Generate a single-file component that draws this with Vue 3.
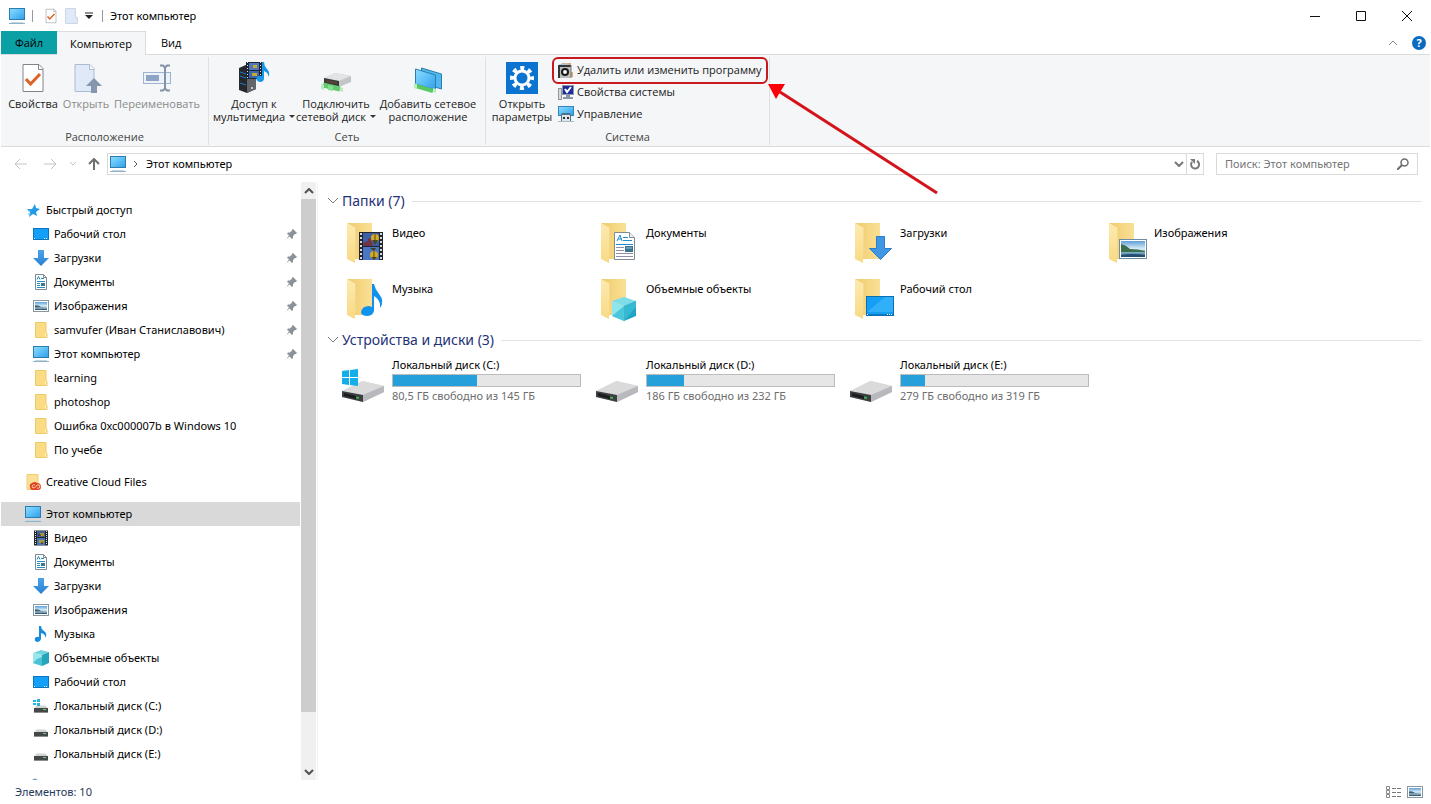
<script setup>
import { ref } from 'vue'

const search = ref('')

const quick = [
  { icon: 'desktop', text: 'Рабочий стол', pin: true },
  { icon: 'download', text: 'Загрузки', pin: true },
  { icon: 'document', text: 'Документы', pin: true },
  { icon: 'picture', text: 'Изображения', pin: true },
  { icon: 'folder', text: 'samvufer (Иван Станиславович)', pin: true },
  { icon: 'pc', text: 'Этот компьютер', pin: true },
  { icon: 'folder', text: 'learning' },
  { icon: 'folder', text: 'photoshop' },
  { icon: 'folder', text: 'Ошибка 0xc000007b в Windows 10' },
  { icon: 'folder', text: 'По учебе' }
]

const computer = [
  { icon: 'film', text: 'Видео' },
  { icon: 'document', text: 'Документы' },
  { icon: 'download', text: 'Загрузки' },
  { icon: 'picture', text: 'Изображения' },
  { icon: 'music', text: 'Музыка' },
  { icon: 'cube', text: 'Объемные объекты' },
  { icon: 'desktop', text: 'Рабочий стол' },
  { icon: 'disk-win', text: 'Локальный диск (C:)' },
  { icon: 'disk', text: 'Локальный диск (D:)' },
  { icon: 'disk', text: 'Локальный диск (E:)' }
]

const tree = [
  { icon: 'star', text: 'Быстрый доступ', items: quick },
  { icon: 'creative', text: 'Creative Cloud Files', items: [] },
  { icon: 'pc', text: 'Этот компьютер', selected: true, items: computer },
  { icon: 'network', text: '', items: [] }
]

const folders = [
  { icon: 'big-film', text: 'Видео' },
  { icon: 'big-document', text: 'Документы' },
  { icon: 'big-download', text: 'Загрузки' },
  { icon: 'big-picture', text: 'Изображения' },
  { icon: 'big-music', text: 'Музыка' },
  { icon: 'big-cube', text: 'Объемные объекты' },
  { icon: 'big-desktop', text: 'Рабочий стол' }
]

const disks = [
  { icon: 'big-disk-win', text: 'Локальный диск (C:)', used: 45, info: '80,5 ГБ свободно из 145 ГБ' },
  { icon: 'big-disk', text: 'Локальный диск (D:)', used: 20, info: '186 ГБ свободно из 232 ГБ' },
  { icon: 'big-disk', text: 'Локальный диск (E:)', used: 13, info: '279 ГБ свободно из 319 ГБ' }
]
</script>

<template>
  <div class="window">
    <svg class="sprite" aria-hidden="true">
      <defs>
        <linearGradient id="g-screen" x1="0" y1="0" x2="1" y2="1">
          <stop offset="0" stop-color="#8fdcfc" /><stop offset="0.5" stop-color="#5cc0f8" /><stop offset="1" stop-color="#2f9de8" />
        </linearGradient>
        <linearGradient id="g-folder" x1="0" y1="0" x2="1" y2="0">
          <stop offset="0" stop-color="#f0cb6c" /><stop offset="1" stop-color="#fae096" />
        </linearGradient>
        <linearGradient id="g-flap" x1="0" y1="0" x2="0" y2="1">
          <stop offset="0" stop-color="#fdeab0" /><stop offset="1" stop-color="#f8da84" />
        </linearGradient>
        <linearGradient id="g-sky" x1="0" y1="0" x2="0" y2="1">
          <stop offset="0" stop-color="#5f9fd6" /><stop offset="0.5" stop-color="#dbeef7" /><stop offset="0.7" stop-color="#7fb0c8" /><stop offset="1" stop-color="#2c6384" />
        </linearGradient>
        <linearGradient id="g-disk" x1="0" y1="0" x2="1" y2="1">
          <stop offset="0" stop-color="#e8e8e8" /><stop offset="1" stop-color="#c4c4c6" />
        </linearGradient>
        <linearGradient id="g-down" x1="0" y1="0" x2="0" y2="1">
          <stop offset="0" stop-color="#4aa3ea" /><stop offset="1" stop-color="#2a7fd4" />
        </linearGradient>
      </defs>

      <symbol id="pc" viewBox="0 0 16 16">
        <rect x="0.5" y="0.5" width="15" height="11" fill="url(#g-screen)" stroke="#2c7cae" />
        <path d="M2 14.5h12" stroke="#c3d6e0" /><path d="M0 15.5h16" stroke="#8fb3c6" />
      </symbol>
      <symbol id="desktop" viewBox="0 0 16 16">
        <rect x="0.5" y="2.5" width="15" height="11" fill="#12a0f8" stroke="#0a76be" />
        <path d="M1 12.5h1M11 12.5h4" stroke="#fff" stroke-dasharray="1 1" />
      </symbol>
      <symbol id="download" viewBox="0 0 16 16">
        <path d="M5 0h6v8h5l-8 8l-8-8h5z" fill="url(#g-down)" />
      </symbol>
      <symbol id="document" viewBox="0 0 16 16">
        <path d="M2.500.5h8l3 3v12h-11z" fill="#fff" stroke="#7d8b93" /><path d="M10.500.5v3h3" fill="none" stroke="#7d8b93" />
        <path d="M4 5.500l1.500-3l1.500 3M8 4.500h3M4 7.500h8M4 9.500h3M4 11.500h3M4 13.500h8" fill="none" stroke="#1e8fc0" />
        <rect x="8" y="9" width="4" height="3" fill="#3e7589" />
      </symbol>
      <symbol id="picture" viewBox="0 0 16 16">
        <rect x="0.5" y="2.500" width="15" height="11" fill="#fff" stroke="#8b979e" />
        <rect x="2" y="4" width="12" height="8" fill="url(#g-sky)" />
        <path d="M2 7.500q3-1 6 1.500l6 1v2H2z" fill="#365f78" /><path d="M2 10h12" stroke="#c6dce8" />
      </symbol>
      <symbol id="folder" viewBox="0 0 16 16">
        <path d="M2 .5h11v10h1v5H2z" fill="#f9dc84" /><path d="M2.500.5h10.500v10l1 1v4h-11.500z" fill="none" stroke="#edca68" />
        <path d="M12.500 11v4" stroke="#fff0bd" />
      </symbol>
      <symbol id="film" viewBox="0 0 16 16">
        <rect x="1" y="0.500" width="14" height="15" fill="#22252b" /><rect x="4" y="1" width="8" height="6" fill="#46618f" /><rect x="4" y="8" width="8" height="7" fill="#4a76b5" />
        <path d="M2.500 1v14M13.500 1v14" stroke="#dfe2e6" stroke-dasharray="1 1" /><path d="M7 3h4v3H7zM6 10h5v3H6z" fill="#a59a3c" />
        <path d="M5 5h3M8 13h2" stroke="#31211b" />
      </symbol>
      <symbol id="music" viewBox="0 0 16 16">
        <path d="M6 0h2q0 3 3 5q4 3 1 7q1-4-4-5v6q-1 3-4 3q-3-1-2-4q2-2 4-1z" fill="#168cdb" />
      </symbol>
      <symbol id="cube" viewBox="0 0 16 16">
        <path d="M0 3l8-3l8 2l-7 3z" fill="#73d3df" /><path d="M0 3l9 2v11l-9-3z" fill="#9be6ed" /><path d="M9 5l7-3v11l-7 3z" fill="#25a4ba" />
        <path d="M4 9l5-2v9l-9-3z" fill="#4ac2d3" />
      </symbol>
      <symbol id="disk" viewBox="0 0 16 16">
        <path d="M3.500 7.500h9l2.500 3H1z" fill="#d3d3d3" /><rect x="1" y="10" width="14" height="4" fill="#45484a" /><rect x="10" y="11" width="3" height="1" fill="#72c977" /><path d="M1 14.500h14" stroke="#8b8d8e" />
      </symbol>
      <symbol id="disk-win" viewBox="0 0 16 16">
        <use href="#disk" /><path d="M0 2h3v2H0zM4 1h3v3H4zM0 5h3v2H0zM4 5h3v3H4z" fill="#25b5e0" />
      </symbol>
      <symbol id="star" viewBox="0 0 16 16">
        <path d="M10 2l1 4l4 1l-4 3l1 4l-4-2l-4 3l1-5l-3-3h5z" fill="#219be5" /><path d="M3 9h3M3 12h3" stroke="#6cbfec" fill="none" />
      </symbol>
      <symbol id="creative" viewBox="0 0 16 16">
        <path d="M2 .5h11v15H2z" fill="#fbe095" stroke="#f1cf74" />
        <path d="M5 13q-1-3 2-4q3-2 5 0q4 0 4 4q0 3-3 3H8q-3 0-3-3z" fill="#e0431f" />
        <path d="M10 11q-2-1-3 1q0 2 2 2q2-1 3-3q3-1 3 2q-1 2-3 1" fill="none" stroke="#fbc9a5" />
      </symbol>
      <symbol id="network" viewBox="0 0 16 16">
        <path d="M7 2q3-3 6 0l3 4v8H5z" fill="#68a8c6" />
      </symbol>
      <symbol id="pin" viewBox="0 0 12 12">
        <path d="M7 1l4 4l-1 1h-1l-2 2v2l-1 1l-2.500-2.500l-3.500 3l3-4l-2-2l1-1h2l2-2v-1z" fill="#8b9299" />
      </symbol>
      <symbol id="sheet-check" viewBox="0 0 24 32">
        <path d="M2 2.500h16l4 4v23H2z" fill="#fff" stroke="#82868a" /><path d="M17.500 2.500v5h4.500" fill="none" stroke="#82868a" />
        <path d="M5 17l4.500 5l9.500-10" fill="none" stroke="#dc6226" stroke-width="3" />
      </symbol>

      <symbol id="big-folder" viewBox="0 0 48 48">
        <path d="M6 4h25v36H12z" fill="url(#g-folder)" /><path d="M6 4l9 5l1 27l-2 2v6l-8-4z" fill="url(#g-flap)" />
        <path d="M15 9v27" stroke="#e9c266" opacity="0.6" />
      </symbol>
      <symbol id="big-film" viewBox="0 0 48 48">
        <use href="#big-folder" /><rect x="18" y="13" width="24" height="28" fill="#23262e" />
        <rect x="22" y="14" width="16" height="13" fill="#3e5fa8" /><rect x="22" y="28" width="16" height="13" fill="#4976c5" />
        <path d="M20 14v27M40 14v27" stroke="#d5d9de" stroke-width="2" stroke-dasharray="2 2" />
        <path d="M22 24l5-2v-3l3 1l2 7H22z" fill="#713346" /><circle cx="34" cy="19" r="4" fill="#d1ac29" /><path d="M31 21h6l-3 5z" fill="#3b4a22" /><circle cx="33" cy="36" r="4" fill="#d1ac29" /><path d="M30 38h6l-3 3zM29 29h6l-2 3z" fill="#453f1f" />
        <path d="M34 15v8M33 32v8" stroke="#694319" />
      </symbol>
      <symbol id="big-document" viewBox="0 0 48 48">
        <use href="#big-folder" /><path d="M19.500 13.500h15l5 5v22h-20z" fill="#fff" stroke="#7f8b92" /><path d="M34.500 13.500v5h5" fill="#eef2f4" stroke="#7f8b92" />
        <path d="M22 22l3-6l2 6M23 20h4M28 18.500h5M28 21.500h9M21 25.500h17" fill="none" stroke="#1f8dcc" />
        <path d="M21 28.500h8M21 31.500h8M21 34.500h17M21 37.500h17" stroke="#8f8fa8" /><rect x="30" y="27" width="8" height="6" fill="#3c7391" /><path d="M31 29h6" stroke="#9cc6dc" />
      </symbol>
      <symbol id="big-download" viewBox="0 0 48 48">
        <use href="#big-folder" /><path d="M27.500 17.500h8v12h7l-11 11l-11-11h7z" fill="#3f97e4" stroke="#2a7cc9" />
      </symbol>
      <symbol id="big-picture" viewBox="0 0 48 48">
        <use href="#big-folder" /><rect x="16.500" y="20.500" width="27" height="19" fill="#fff" stroke="#6f8ca3" /><rect x="18" y="22" width="24" height="16" fill="url(#g-sky)" />
        <path d="M18 25q5 1 9 5q8 0 15 2v1H18z" fill="#3c6f4c" /><path d="M18 36q12-2 24 0v2H18z" fill="#244f73" />
      </symbol>
      <symbol id="big-music" viewBox="0 0 48 48">
        <use href="#big-folder" /><path d="M31 9h2q1 5 5 10q6 7 1 14q1-8-6-12v14q0 5-6 6q-7 0-7-4q1-6 8-6l3 1z" fill="#0f93ee" />
      </symbol>
      <symbol id="big-cube" viewBox="0 0 48 48">
        <use href="#big-folder" /><path d="M17 26l12-4l12 4l-12 5z" fill="#7cdce8" /><path d="M17 26l12 5v15l-12-5z" fill="#8ee5ee" /><path d="M29 31l12-5v15l-12 5z" fill="#20a4c1" /><path d="M29 31v15l-12-5z" fill="#4cc7da" /><path d="M29 31l12-5v6l-12 14z" fill="#35b8d2" />
      </symbol>
      <symbol id="big-desktop" viewBox="0 0 48 48">
        <use href="#big-folder" /><rect x="17.500" y="21.500" width="27" height="19" fill="#149ef4" stroke="#0c6fb2" /><path d="M18 37l18-15h8v15z" fill="#32aff9" /><path d="M18 39.500h26" stroke="#0e78c0" /><path d="M18 39.500h2M38 39.500h5" stroke="#fff" stroke-dasharray="1 1" />
      </symbol>
      <symbol id="big-disk" viewBox="0 0 48 48">
        <path d="M1 28l20-10l22 5v6L22 39L1 34z" fill="url(#g-disk)" /><path d="M1 28l21-10l21 5l-21 9z" fill="#dadadb" /><path d="M22 32l21-9v6l-21 10z" fill="#b8b9bc" />
        <path d="M1 28l21 4v7L1 34z" fill="#3c3f41" /><path d="M3 30l12 3v3L3 33z" fill="#1a1c1e" /><path d="M15 33.500l3 .5v2l-3-.5z" fill="#3cae4b" />
      </symbol>
      <symbol id="big-disk-win" viewBox="0 0 48 48">
        <use href="#big-disk" /><path d="M1 8l7-1v7H1zM9 7l8-1v8H9zM1 15h7v7l-7-1zM9 15h8v8l-8-1z" fill="#14aeea" />
      </symbol>
    </svg>

    <header class="titlebar">
      <svg class="i16"><use href="#pc" /></svg>
      <span class="bar"></span>
      <button class="quick-btn" aria-label="Свойства"><svg width="12" height="16"><use href="#sheet-check" /></svg></button>
      <button class="quick-btn" aria-label="Новая папка">
        <svg width="14" height="16" viewBox="0 0 14 16"><path d="M.5.5h10v9h2v6H.5z" fill="#dfe9f8" stroke="#cbd6e6" /></svg>
      </button>
      <button class="quick-btn narrow" aria-label="Настройка панели">
        <svg width="8" height="8" viewBox="0 0 8 8"><path d="M0 1h8" stroke="#222" /><path d="M0 3h8l-4 4z" fill="#222" /></svg>
      </button>
      <span class="bar"></span>
      <h1>Этот компьютер</h1>
      <div class="controls">
        <button aria-label="Свернуть"><svg viewBox="0 0 12 12"><path d="M1 6.500h10" /></svg></button>
        <button aria-label="Развернуть"><svg viewBox="0 0 12 12"><path d="M1.500 1.500h9v9h-9z" /></svg></button>
        <button aria-label="Закрыть"><svg viewBox="0 0 12 12"><path d="M1 1l10 10M11 1L1 11" /></svg></button>
      </div>
    </header>

    <nav class="tabs">
      <button class="file">Файл</button>
      <button class="active">Компьютер</button>
      <button>Вид</button>
      <div class="tabs-end">
        <button aria-label="Свернуть ленту"><svg width="10" height="6" viewBox="0 0 10 6"><path d="M1 5l4-4l4 4" fill="none" stroke="#8b8b8b" /></svg></button>
        <button class="help" aria-label="Справка">?</button>
      </div>
    </nav>

    <section class="ribbon">
      <div class="group">
        <div class="tools location">
          <button class="tool"><svg width="24" height="32"><use href="#sheet-check" /></svg><span>Свойства</span></button>
          <button class="tool" disabled>
            <svg width="32" height="32" viewBox="0 0 32 32"><path d="M5 2.500h15l4 4v23H5z" fill="#dfe9f7" stroke="#aebcd0" /><path d="M19.500 2.500v5h5" fill="#f5f8fc" stroke="#aebcd0" /><path d="M24 16l8 8h-5v7h-6v-7h-5z" fill="#8696ae" /></svg>
            <span>Открыть</span>
          </button>
          <button class="tool" disabled>
            <svg width="32" height="32" viewBox="0 0 32 32"><rect x="2.500" y="10.500" width="27" height="11" fill="#edf2f9" stroke="#9fb4d1" /><rect x="5" y="13" width="13" height="6" fill="#8da4c4" /><path d="M19 3.500h3l2 2l2-2h3M24 5v22M19 28.500h3l2-2l2 2h3" fill="none" stroke="#8292a8" stroke-width="2" /></svg>
            <span>Переименовать</span>
          </button>
        </div>
        <h2>Расположение</h2>
      </div>

      <div class="group">
        <div class="tools network">
          <button class="tool">
            <svg width="32" height="32" viewBox="0 0 32 32"><path d="M1 6l9-4l8 3v22l-9 4l-8-3z" fill="#25282c" /><path d="M9 8l9-3v22l-9 4z" fill="#62666b" /><path d="M2 10l6 2M2 14l6 2M2 21l6 2" stroke="#1c79c3" /><circle cx="14" cy="26" r="1" fill="#e6e6e6" /><rect x="8" y="0" width="16" height="17" fill="#202535" /><rect x="11" y="1" width="10" height="7" fill="#4f77b9" /><rect x="11" y="9" width="10" height="7" fill="#3c67ac" /><path d="M9.500 0v17M22.500 0v17" stroke="#dde2e8" stroke-dasharray="1 2" /><path d="M15 3h4v3h-4zM14 11h5v3h-5z" fill="#c2ab2e" /><path d="M24 0h2q0 4 3 7q4 4 1 8q1-4-4-6v7q0 4-4 4q-5-1-3-5q2-2 5-1z" fill="#1696ed" /></svg>
            <span>Доступ к<br>мультимедиа<i class="caret"></i></span>
          </button>
          <button class="tool">
            <svg width="32" height="32" viewBox="0 0 32 32"><path d="M4 16l11-5l16 3v6L19 25L4 22z" fill="#c3c5c6" /><path d="M4 16l11-5l16 3l-12 5z" fill="#e2e3e3" /><path d="M4 16l15 3v6L4 22z" fill="#373a3b" /><path d="M6 18l11 2v2L6 20z" fill="#5d4338" /><path d="M3 23l17 4" stroke="#64c870" stroke-width="5" /><path d="M1 22l3 1v5l-3-1zM20 25l3 1v4l-3-1z" fill="#bde8c0" /><path d="M8 23l5 1v5l-5-1z" fill="#82e08c" /></svg>
            <span>Подключить<br>сетевой диск<i class="caret"></i></span>
          </button>
          <button class="tool">
            <svg width="32" height="32" viewBox="0 0 32 32"><path d="M9.500 6l20 6v15l-20-6z" fill="#53b7ef" stroke="#2a7fad" /><path d="M3.500 7l20 6v15l-20-6z" fill="url(#g-screen)" stroke="#2a7fad" /><path d="M4 24l17 5" stroke="#58c765" stroke-width="4" /><path d="M2 21l3 1v5l-3-1zM21 26l3 1v4l-3-1z" fill="#b8edbd" /></svg>
            <span>Добавить сетевое<br>расположение</span>
          </button>
        </div>
        <h2>Сеть</h2>
      </div>

      <div class="group">
        <div class="tools system">
          <button class="tool">
            <svg width="32" height="32" viewBox="0 0 32 32"><rect width="32" height="32" fill="#0b74d1" /><circle cx="16" cy="16" r="7" fill="none" stroke="#fff" stroke-width="3" /><circle cx="16" cy="16" r="10" fill="none" stroke="#fff" stroke-width="4" stroke-dasharray="4 3.850" stroke-dashoffset="2" /></svg>
            <span>Открыть<br>параметры</span>
          </button>
          <div class="small-tools">
            <button>
              <svg class="i16" viewBox="0 0 16 16"><path d="M4 1h9v9h2v5H4z" fill="#e6a467" /><path d="M1 2l9-1v3H1z" fill="#b2c3d2" /><rect x="0" y="3" width="13" height="13" fill="#31363a" /><rect x="2" y="5" width="11" height="11" fill="#b9bdbd" /><circle cx="7" cy="10" r="4" fill="#17191b" /><circle cx="7" cy="10" r="2" fill="#f5f5f5" /><path d="M13 3v13" stroke="#777" /></svg>
              <span>Удалить или изменить программу</span>
            </button>
            <button>
              <svg class="i16" viewBox="0 0 16 16"><rect x="0.500" y="4.500" width="3" height="11" fill="#d5d8dc" stroke="#92979c" /><rect x="4.500" y="1.500" width="11" height="9" fill="#1c2c9c" stroke="#8b96ad" /><path d="M7 5l2 3l4-5" fill="none" stroke="#fff" stroke-width="2" /><path d="M8 11h4v2h3v2H5v-2h3z" fill="#8996a9" /></svg>
              <span>Свойства системы</span>
            </button>
            <button>
              <svg class="i16" viewBox="0 0 16 16"><rect x="0.500" y="0.500" width="15" height="9" fill="url(#g-screen)" stroke="#3886b7" /><path d="M3 9q0-2 2-2h6q2 0 2 2v6H3z" fill="#526f83" /><rect x="4" y="9" width="8" height="6" fill="#dfe5ea" /><path d="M6 11v2M10 11v2" stroke="#25323b" stroke-width="2" /><path d="M0 15.500h16" stroke="#a9bdc9" /></svg>
              <span>Управление</span>
            </button>
            <div class="frame"></div>
            <svg class="arrow" width="172" height="112" viewBox="0 0 172 112"><path d="M12 8L169 109" stroke="#d3141b" stroke-width="3" /><path d="M0 0h17l-9 15z" fill="#fb0007" /></svg>
          </div>
        </div>
        <h2>Система</h2>
      </div>
    </section>

    <div class="navbar">
      <div class="history">
        <button aria-label="Назад"><svg width="14" height="12" viewBox="0 0 14 12"><path d="M1 6h12M6 1L1 6l5 5" stroke="#c4c4c4" /></svg></button>
        <button aria-label="Вперед"><svg width="14" height="12" viewBox="0 0 14 12"><path d="M1 6h12M8 1l5 5l-5 5" stroke="#c4c4c4" /></svg></button>
        <button class="tiny" aria-label="Недавние"><svg width="6" height="4" viewBox="0 0 6 4"><path d="M0 0l3 3l3-3" stroke="#c4c4c4" /></svg></button>
        <button class="up" aria-label="Вверх"><svg width="12" height="12" viewBox="0 0 12 12"><path d="M6 12V1M1 6l5-5l5 5" stroke="#707070" stroke-width="2" /></svg></button>
      </div>
      <div class="address">
        <svg class="i16"><use href="#pc" /></svg>
        <svg width="4" height="6" viewBox="0 0 4 6"><path d="M0 0l3 3l-3 3" fill="none" stroke="#555" /></svg>
        <a href="#">Этот компьютер</a>
        <button class="drop" aria-label="Список"><svg width="10" height="6" viewBox="0 0 10 6"><path d="M1 1l4 4l4-4" fill="none" stroke="#777" stroke-width="2" /></svg></button>
        <button class="reload" aria-label="Обновить"><svg width="12" height="12" viewBox="0 0 12 12"><path d="M8 3a4 4 0 1 1-5 1" fill="none" stroke="#7a7a7a" stroke-width="2" /><path d="M1 1h5v5z" fill="#7a7a7a" /></svg></button>
      </div>
      <label class="search">
        <input v-model="search" type="text" placeholder="Поиск: Этот компьютер" aria-label="Поиск">
        <svg width="12" height="12" viewBox="0 0 12 12"><circle cx="7.500" cy="4.500" r="3.500" fill="none" stroke="#6e6e6e" stroke-width="1.500" /><path d="M5 7l-5 5" stroke="#6e6e6e" stroke-width="2" /></svg>
      </label>
    </div>

    <div class="body">
      <aside>
        <div class="tree">
          <div v-for="node in tree" :key="node.icon" class="branch">
            <a href="#" class="row root" :class="{ selected: node.selected }">
              <svg class="i16"><use :href="'#' + node.icon" /></svg><span>{{ node.text }}</span>
            </a>
            <a v-for="item in node.items" :key="item.text" href="#" class="row">
              <svg class="i16"><use :href="'#' + item.icon" /></svg><span>{{ item.text }}</span>
              <svg v-if="item.pin" class="pin"><use href="#pin" /></svg>
            </a>
          </div>
        </div>
        <div class="scroll">
          <button aria-label="Прокрутить вверх"><svg width="10" height="6" viewBox="0 0 10 6"><path d="M1 5l4-4l4 4" fill="none" stroke="#505050" stroke-width="2" /></svg></button>
          <div class="track"><div class="thumb"></div></div>
          <button aria-label="Прокрутить вниз"><svg width="10" height="6" viewBox="0 0 10 6"><path d="M1 1l4 4l4-4" fill="none" stroke="#505050" stroke-width="2" /></svg></button>
        </div>
      </aside>

      <main>
        <h2 class="section">
          <svg width="12" height="8" viewBox="0 0 12 8"><path d="M1 1l5 5l5-5" fill="none" stroke="#7c7c7c" /></svg>Папки (7)
        </h2>
        <div class="tiles">
          <a v-for="f in folders" :key="f.text" href="#" class="tile">
            <svg class="i48"><use :href="'#' + f.icon" /></svg><span>{{ f.text }}</span>
          </a>
        </div>
        <h2 class="section">
          <svg width="12" height="8" viewBox="0 0 12 8"><path d="M1 1l5 5l5-5" fill="none" stroke="#7c7c7c" /></svg>Устройства и диски (3)
        </h2>
        <div class="tiles">
          <a v-for="d in disks" :key="d.text" href="#" class="tile disk">
            <svg class="i48"><use :href="'#' + d.icon" /></svg>
            <div class="info">
              <span>{{ d.text }}</span>
              <div class="meter" role="progressbar" :aria-label="d.text" :aria-valuenow="d.used"><div class="used" :style="{ width: d.used + '%' }"></div></div>
              <span class="free">{{ d.info }}</span>
            </div>
          </a>
        </div>
      </main>
    </div>

    <footer>
      <span>Элементов: 10</span>
      <div class="views">
        <button aria-label="Таблица"><svg width="18" height="14" viewBox="0 0 18 14"><path d="M1.500 1.500h3v3h-3zM1.500 5.500h3v3h-3zM1.500 9.500h3v3h-3z" fill="#fff" stroke="#888" /><path d="M7 3.500h4M7 7.500h4M7 11.500h4M12 3.500h4M12 7.500h4M12 11.500h4" stroke="#777" /></svg></button>
        <button aria-label="Крупные значки"><svg class="i16"><use href="#picture" /></svg></button>
      </div>
    </footer>
  </div>
</template>

<style>
body { background: #fff; }
</style>

<style scoped>
.window {
  display: flex;
  flex-direction: column;
  height: 100vh;
  overflow: hidden;
  font-family: "Noto Sans", "Open Sans", sans-serif;
  font-size: 11px;
  line-height: 16px;
  color: #000;
}
.window *, .window { box-sizing: border-box; }
.sprite { position: absolute; width: 0; height: 0; }
svg { display: block; flex: none; }
button { display: flex; align-items: center; justify-content: center; padding: 0; border: 0; background: none; color: inherit; font: inherit; }
a { color: inherit; text-decoration: none; }
h1, h2 { margin: 0; font-size: inherit; font-weight: 400; }
.i16 { width: 16px; height: 16px; }
.i48 { width: 48px; height: 48px; }

.titlebar { display: flex; align-items: center; height: 31px; padding-left: 9px; }
.bar { width: 1px; height: 12px; margin: 0 7px; background: #999; }
.quick-btn { width: 21px; height: 22px; }
.narrow { width: 13px; }
.titlebar h1 { flex: 1; }
.controls { display: flex; padding-right: 1px; }
.controls button { width: 46px; height: 30px; }
.controls svg { width: 12px; height: 12px; fill: none; stroke: #111; }

.tabs, .ribbon { font-family: "Open Sans", "Noto Sans", sans-serif; }
.tabs { display: flex; height: 24px; padding-left: 1px; }
.tabs > button { padding: 0 15px; }
.tabs .file { width: 56px; padding: 0; background: #0b9fa6; }
.tabs .active { z-index: 1; width: 89px; padding: 0; background: #f5f6f7; border: 1px solid #dadbdc; border-bottom: 0; border-left: 0; }
.tabs-end { display: flex; align-items: center; gap: 14px; margin-left: auto; padding-right: 5px; }
.tabs-end .help { width: 14px; height: 14px; border-radius: 50%; background: #0a6cc0; color: #fff; font-weight: 700; }

.ribbon { display: flex; height: 93px; margin: -1px 1px 0; background: #f5f6f7; border-top: 1px solid #dadbdc; border-bottom: 1px solid #dadbdc; }
.group { display: flex; flex-direction: column; justify-content: space-between; margin: 2px 0 1px; padding-top: 5px; border-right: 1px solid #e0e1e3; color: #222; }
.group h2 { line-height: 16px; text-align: center; color: #444; }
.tools { display: grid; }
.location { grid-template-columns: 54px 52px 90px; padding: 0 6px 0 5px; }
.network { grid-template-columns: 82px 82px 102px; padding: 0 6px 0 4px; }
.system { grid-template-columns: 64px auto; padding: 0 2px 0 4px; }
.tool { flex-direction: column; justify-content: flex-start; gap: 3px; line-height: 13px; white-space: nowrap; }
.tool:disabled { color: #8a8a8a; }
.caret { display: inline-block; margin-left: 4px; border: 3px solid transparent; border-top-color: #333; border-bottom: 0; vertical-align: 3px; }
.small-tools { position: relative; width: 213px; margin-top: -3px; }
.small-tools button { gap: 3px; height: 22px; padding-left: 4px; white-space: nowrap; }
.frame { position: absolute; left: -2px; top: -2px; width: 216px; height: 27px; border: 2px solid #c81820; border-radius: 6px; }
.arrow { position: absolute; left: 214px; top: 25px; z-index: 2; }

.navbar { display: flex; align-items: center; height: 35px; padding: 0 13px 2px 10px; }
.history { display: flex; width: 97px; }
.history svg { fill: none; }
.history button { width: 22px; height: 22px; margin-right: 7px; }
.history .tiny { width: 10px; margin-right: 5px; }
.history .up { margin-right: 0; }
.address { display: flex; flex: 1; align-items: center; gap: 8px; height: 22px; padding-left: 2px; border: 1px solid #d9d9d9; }
.address a { flex: 1; }
.address .drop { width: 15px; height: 20px; margin-right: -8px; }
.address .reload { width: 17px; height: 20px; border-left: 1px solid #d9d9d9; }
.search { display: flex; align-items: center; width: 202px; height: 22px; margin-left: 12px; padding: 0 8px; border: 1px solid #d9d9d9; }
.search input { flex: 1; min-width: 0; padding: 0; border: 0; outline: 0; background: none; color: #111; font: inherit; }
.search input::placeholder { color: #757575; opacity: 1; }

.body { display: flex; flex: 1; min-height: 0; }
aside { display: flex; width: 318px; border-right: 1px solid #f3f3f3; }
.tree { flex: 1; padding: 16px 1px 0; overflow: hidden; }
.branch { margin-bottom: 8px; }
.row { display: flex; align-items: center; gap: 5px; height: 24px; padding: 0 2px 0 32px; white-space: nowrap; }
.row.root { padding-left: 24px; }
.row.selected { background: #d9d9d9; }
.pin { width: 12px; height: 12px; margin-left: auto; }
.scroll { display: flex; flex-direction: column; width: 15px; margin-right: 1px; background: #f0f0f0; }
.scroll button { height: 17px; }
.track { display: flex; flex: 1; flex-direction: column; }
.track::after { content: ""; flex: 1; }
.thumb { flex: 10; background: #cdcdcd; }

main { flex: 1; min-width: 0; padding: 9px 9px 0; }
.section { display: flex; align-items: center; gap: 3px; height: 20px; font-size: 14px; line-height: 20px; color: #1f3278; }
.section::after { content: ""; flex: 1; height: 1px; margin-left: 4px; background: #e0e3e6; }
.tiles { display: grid; grid-template-columns: repeat(auto-fill, 254px); row-gap: 8px; padding: 8px 0 7px 14px; }
.tile { display: flex; gap: 3px; height: 48px; }
.tile > span { padding-top: 6px; }
.disk .info { flex: 1; margin-right: 14px; }
.info span { display: block; }
.info span:first-child { line-height: 14px; }
.disk .i48 { margin-top: 5px; }
.meter { height: 13px; margin: 2px 0 1px; background: #e6e6e6; border: 1px solid #bcbcbc; }
.used { height: 100%; background: #26a0da; }
.info .free { color: #6d6d6d; }

footer { display: flex; align-items: center; justify-content: space-between; height: 24px; padding: 0 8px 0 15px; color: #1e395b; }
.views { display: flex; gap: 4px; }
</style>
